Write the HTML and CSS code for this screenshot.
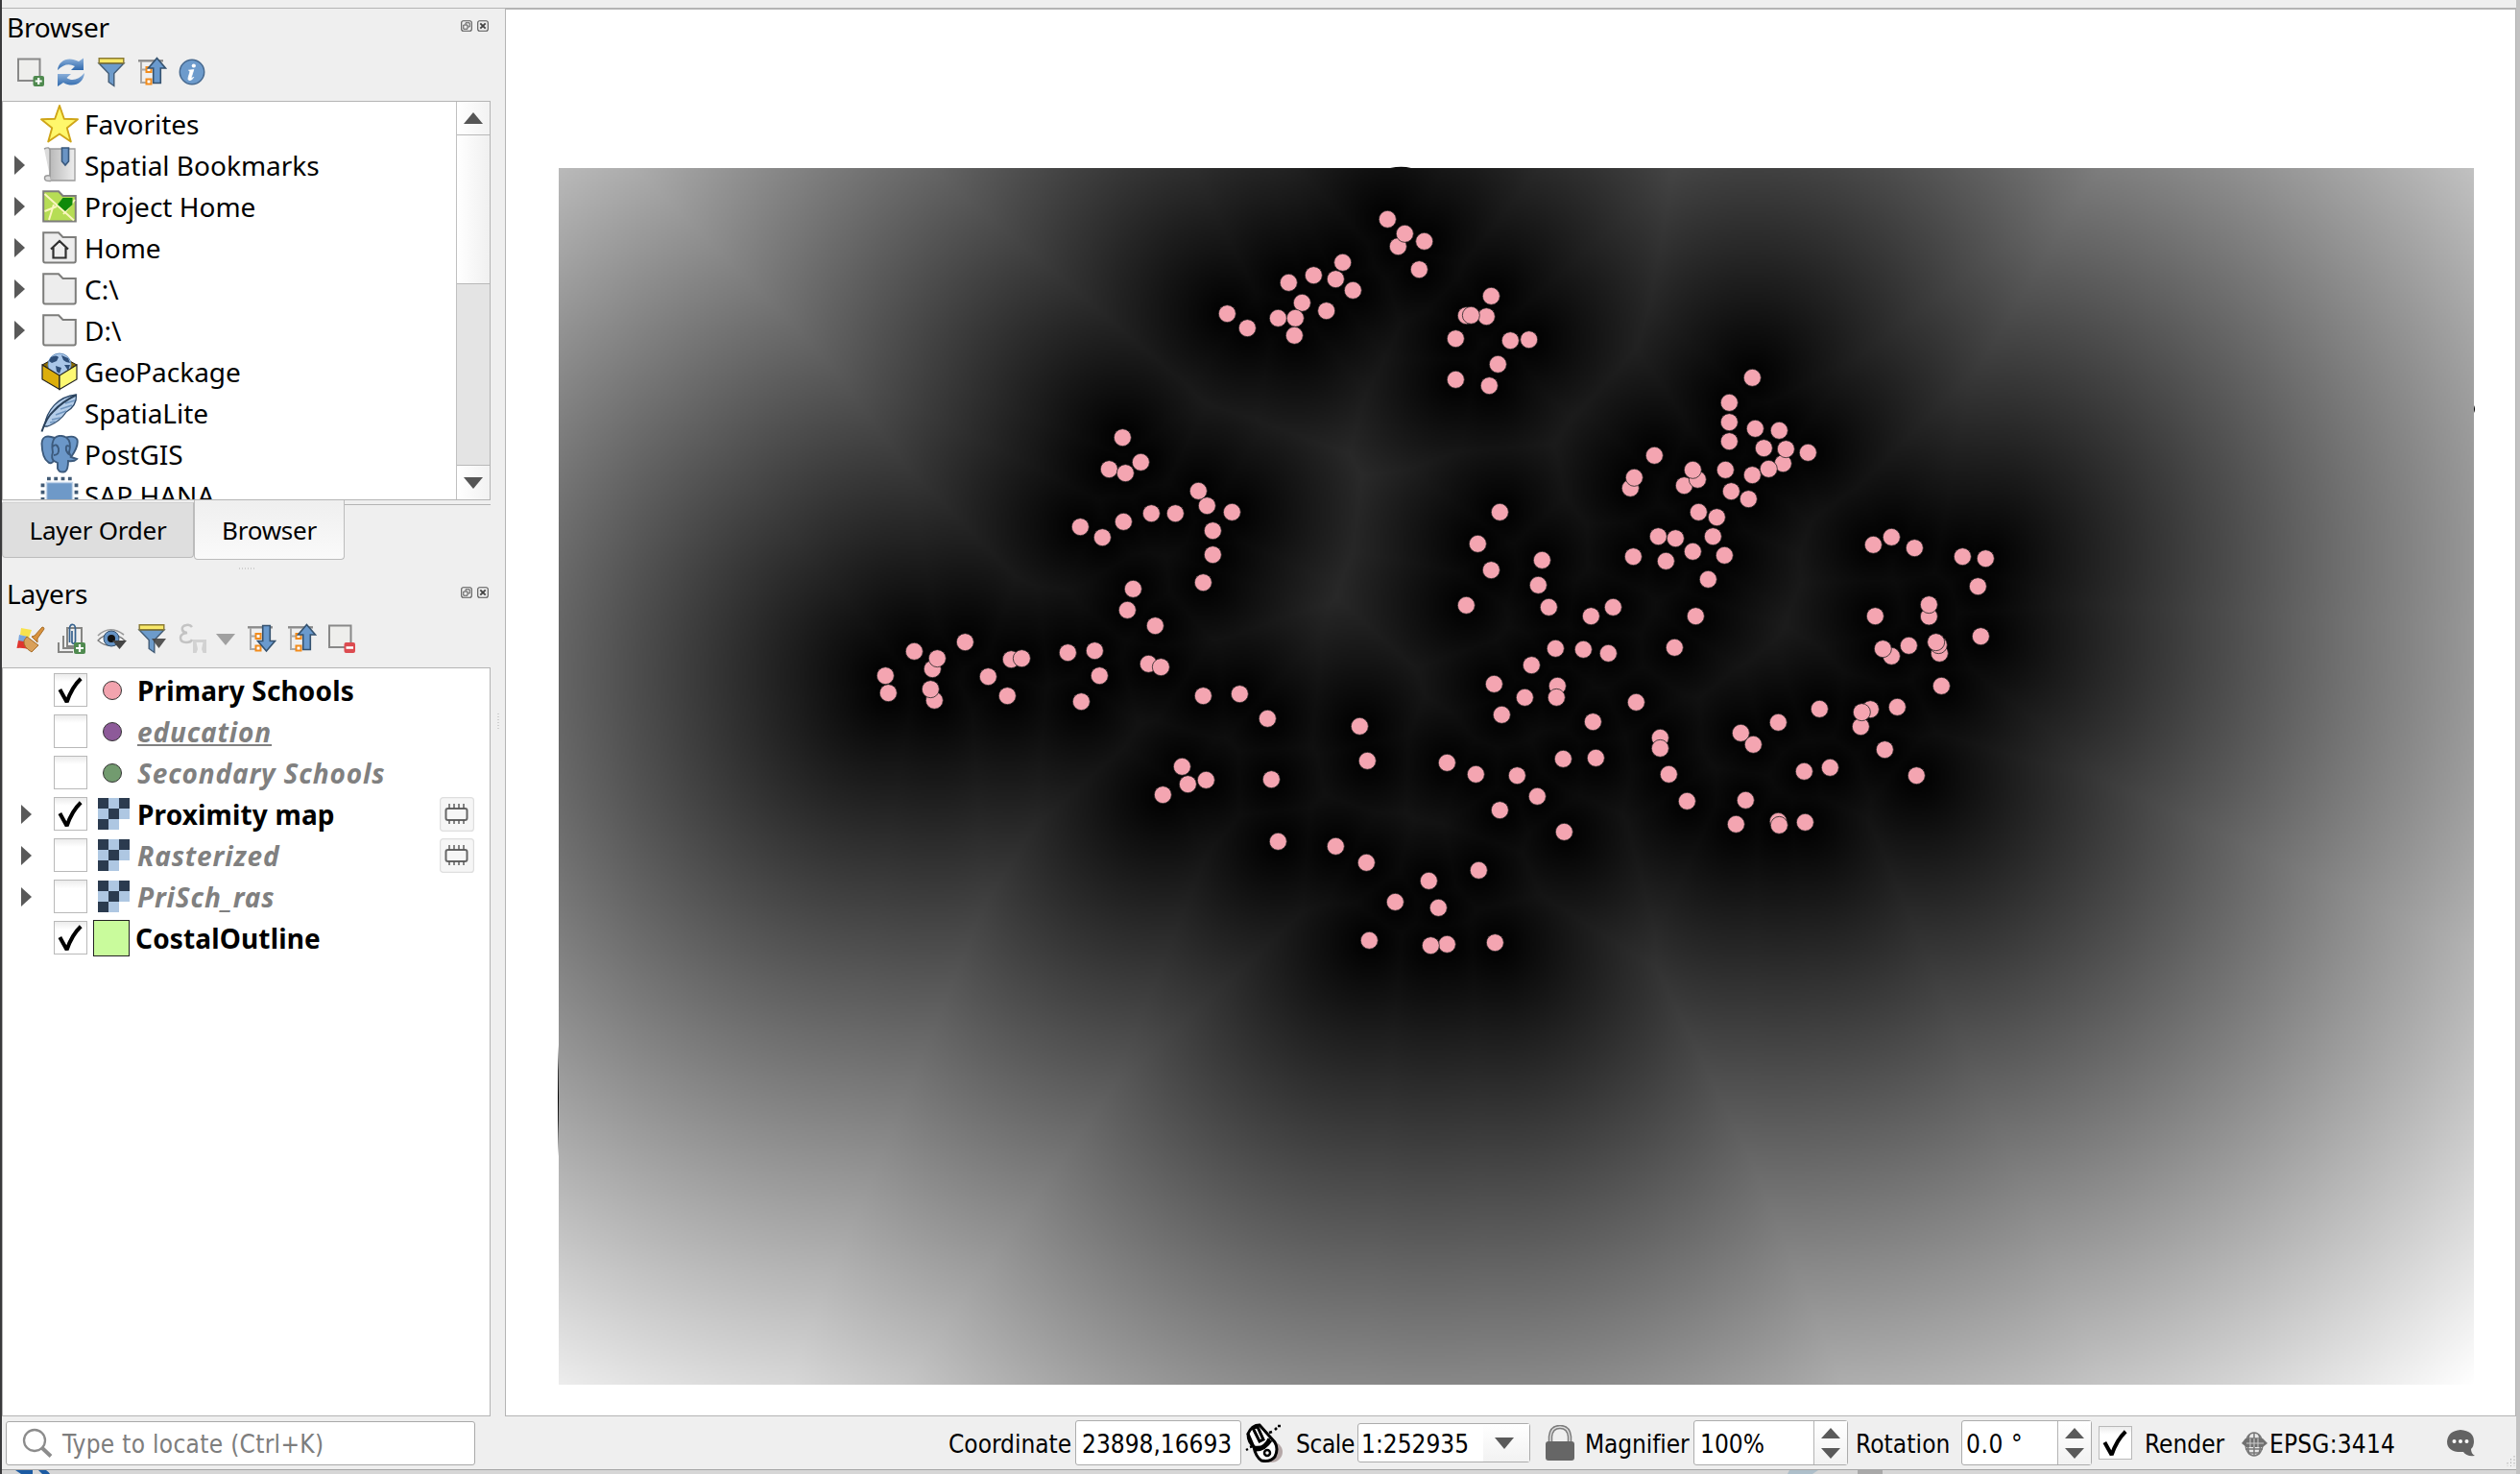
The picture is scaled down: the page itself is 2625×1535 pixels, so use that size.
FILE: index.html
```html
<!DOCTYPE html>
<html lang="en">
<head>
<meta charset="utf-8">
<title>Proximity map</title>
<link rel="stylesheet" href="styles.css">
</head>
<body>
<svg class="defs" width="0" height="0">
  <defs>
    <linearGradient id="gRefresh" x1="0" y1="0" x2="0" y2="1"><stop offset="0" stop-color="#8fb3dc"/><stop offset="1" stop-color="#2f69ad"/></linearGradient>
    <linearGradient id="gBook" x1="0" y1="0" x2="1" y2="0"><stop offset="0" stop-color="#b9b9b9"/><stop offset="1" stop-color="#eeeeee"/></linearGradient>
    <symbol id="float" viewBox="0 0 12 12"><rect x=".7" y=".7" width="10.6" height="10.6" rx="2" fill="none" stroke="#555" stroke-width="1.1"/><path d="M5 4.500V2.800H9.200V7H7.500M2.800 5H7V9.200H2.800Z" fill="none" stroke="#555" stroke-width="1"/></symbol>
    <symbol id="close" viewBox="0 0 12 12"><rect x=".7" y=".7" width="10.6" height="10.6" rx="2" fill="none" stroke="#555" stroke-width="1.1"/><path d="M3.300 3.300 8.700 8.700M8.700 3.300 3.300 8.700" stroke="#444" stroke-width="1.900"/></symbol>
    <symbol id="tri" viewBox="0 0 11 20"><path d="M0 0 11 10 0 20Z" fill="#595959"/></symbol>
    <symbol id="folder" viewBox="0 0 36 34"><path d="M1.200 1.200H17L21.500 6H34.800V30.500Q34.800 32.500 33 32.500H3Q1.200 32.500 1.200 30.500Z" fill="#ededed" stroke="#7d7d7b" stroke-width="2"/></symbol>
    <symbol id="raster" viewBox="0 0 33 33"><path d="M0 0H11V11H0ZM22 0H33V11H22ZM11 11H22V22H11ZM0 22H11V33H0Z" fill="#2b3b4f"/><path d="M11 0H22V11H11ZM0 11H11V22H0ZM22 11H33V22H22ZM11 22H22V33H11Z" fill="#aec7e2"/></symbol>
    <symbol id="check" viewBox="0 0 34 34"><path d="M5.500 16.500 13 30Q18.500 14 28 5" fill="none" stroke="#000" stroke-width="4.200" stroke-linejoin="bevel"/></symbol>
    <symbol id="funnel" viewBox="0 0 32 32"><path d="M3 7H29L18.800 17.500V30.500L13.200 26.500V17.500Z" fill="#6d9bcb" stroke="#415a75" stroke-width="1.400"/><path d="M3.200 1.800H28.800V6.800H3.200Z" fill="#f8e868" stroke="#8a7a33" stroke-width="1.400"/></symbol>
    <symbol id="tree" viewBox="0 0 32 32"><path d="M2 4.300H28" stroke="#8b8b8b" stroke-width="2.400"/><path d="M5 5V27H11M5 13.500H11" fill="none" stroke="#a8a8a8" stroke-width="2"/><path d="M10.500 11H15.500V16H10.500ZM10.500 23.500H15.500V28.500H10.500Z" fill="#fff" stroke="#f28c1c" stroke-width="2"/></symbol>
    <symbol id="chip" viewBox="0 0 36 36"><rect x=".6" y=".6" width="34.800" height="34.800" rx="3" fill="#f6f6f6" stroke="#dedede" stroke-width="1.200"/><rect x="6.500" y="12" width="22" height="12" rx="2" fill="none" stroke="#666" stroke-width="2"/><path d="M10 7V12M15 7V12M20 7V12M25 7V12M10 24V28M15 24V28M20 24V28M25 24V28" stroke="#555" stroke-width="1.400"/></symbol>
  </defs>
</svg>
<div class="window">
  <div class="topstrip"></div>
  <main class="main">
    <aside class="docks">
      <section class="dock browser">
        <header class="title"><h2 class="ui">Browser</h2><span class="tools"><svg><use href="#float"/></svg><svg><use href="#close"/></svg></span></header>
        <div class="toolbar">
          <svg viewBox="0 0 32 32"><rect x="3" y="2.500" width="22.500" height="22.500" fill="#eeeeec" stroke="#888" stroke-width="2"/><rect x="18.500" y="20" width="11.500" height="11" rx="2" fill="#4f8a4f"/><path d="M24.200 22V29M20.700 25.500H27.700" stroke="#fff" stroke-width="2.200"/></svg>
          <svg viewBox="0 0 32 32"><path d="M2 14C3 4 13-1 24 5L29 1.500V14H16L20 10C14 7 8 8 2 14Z" fill="url(#gRefresh)"/><path d="M30 17C29 28 18 33 8 27L2 31V18H16L11.500 22C17 26 24 24 30 17Z" fill="url(#gRefresh)"/></svg>
          <svg><use href="#funnel"/></svg>
          <svg viewBox="0 0 32 32"><use href="#tree"/><path d="M21.500 1.500 30.500 12H25.300V27.500H17.700V12H12.500Z" fill="#6a9ace" stroke="#35526f" stroke-width="1.600"/></svg>
          <svg viewBox="0 0 32 32"><circle cx="16" cy="16" r="12.700" fill="#6d9bcc" stroke="#47698f" stroke-width="1.500"/><circle cx="17.800" cy="9.500" r="2.100" fill="#fff"/><path d="M12.500 14.200 17.800 13.500 15.200 21.800Q15 23 17.800 21.400 15.500 25.300 12.800 24.500 11.500 24 12.200 21.600L14 15.600Z" fill="#fff" stroke="#fff" stroke-width=".8"/></svg>
        </div>
        <div class="tree">
          <ul class="nodes">
            <li><i></i><svg class="ic" viewBox="0 0 40 40"><path d="M20 1 24.800 14.700 39 15.300 27.800 24.300 31.800 38.500 20 30.500 8.200 38.500 12.200 24.300 1 15.300 15.200 14.700Z" fill="#fff76b" stroke="#cfa518" stroke-width="1.900" stroke-linejoin="round"/></svg><span class="ui">Favorites</span></li>
            <li><svg class="ar"><use href="#tri"/></svg><svg class="ic" viewBox="0 0 40 40"><path d="M10 3H36V36H10Z" fill="url(#gBook)" stroke="#9a9a9a" stroke-width="1.300"/><path d="M4 3Q10 0 10 5V31Q4 30 4.500 34 5 37 11 36.500" fill="#dcdcdc" stroke="#9a9a9a" stroke-width="1.500"/><path d="M22.500 2H29.500V16L26 20 22.500 16Z" fill="#6a94c4" stroke="#38587c" stroke-width="1.600"/></svg><span class="ui">Spatial Bookmarks</span></li>
            <li><svg class="ar"><use href="#tri"/></svg><svg class="ic" viewBox="0 0 40 40"><path d="M3.200 4.200H19L23.500 9H36.800V35.500H3.200Z" fill="#b6dd55" stroke="#7d7d7b" stroke-width="2"/><path d="M4.500 7 35 34.500M4.500 25 17 20M9 34 14 18M24 28 36 13" stroke="#fbf6c0" stroke-width="2" fill="none"/><path d="M18 18 23.500 11H33.500V18L26 25Z" fill="#0f8a0a"/></svg><span class="ui">Project Home</span></li>
            <li><svg class="ar"><use href="#tri"/></svg><svg class="ic" viewBox="0 0 40 40"><use href="#folder" x="2" y="3" width="36" height="34"/><path d="M11 21.500 20 13 29 21.500M13.500 20V30.500H26.500V20" fill="none" stroke="#2f2f2f" stroke-width="2.200"/></svg><span class="ui">Home</span></li>
            <li><svg class="ar"><use href="#tri"/></svg><svg class="ic" viewBox="0 0 40 40"><use href="#folder" x="2" y="3" width="36" height="34"/></svg><span class="ui">C:\</span></li>
            <li><svg class="ar"><use href="#tri"/></svg><svg class="ic" viewBox="0 0 40 40"><use href="#folder" x="2" y="3" width="36" height="34"/></svg><span class="ui">D:\</span></li>
            <li><i></i><svg class="ic" viewBox="0 0 40 40"><path d="M2 13 20 3 38 13 20 24Z" fill="#8a6a00" stroke="#222" stroke-width="1"/><circle cx="20" cy="13" r="12" fill="#a9c6e8" stroke="#6a92bf"/><path d="M11 5Q17 2 19 5L17 9 12 11 9 9ZM22 3 29 6 31 11 27 10 24 8ZM16 14 22 16 20 22 17 20ZM25 13 31 13 29 19Z" fill="#2d4d77"/><path d="M2 13 20 24V38.500L2 28Z" fill="#dcae0b" stroke="#222" stroke-width="1.200"/><path d="M38 13 20 24V38.500L38 28Z" fill="#fdf872" stroke="#222" stroke-width="1.200"/></svg><span class="ui">GeoPackage</span></li>
            <li><i></i><svg class="ic" viewBox="0 0 40 40"><path d="M4 34C7 17 18 3 37.500 1 38 10 34 15 27 19 23 25 17 30 10 33L7 34Z" fill="#b4cde9" stroke="#2e4a6a" stroke-width="1.300"/><path d="M12 27 21 25M16 22 27 18M21 16 33 12M26 10 36 7M10 30 16 29" fill="none" stroke="#6f95bf" stroke-width="1.500"/><path d="M1.500 39.500Q6 25 14 18 22 9 37 1.500" fill="none" stroke="#2a415b" stroke-width="2"/></svg><span class="ui">SpatiaLite</span></li>
            <li><i></i><svg class="ic" viewBox="0 0 40 40"><path d="M15 3Q2-2 1.500 9 2 24 8 28 11 31 14 27L18 29V35Q20 40 26 38 29 36 29 27 35 28 38 25L32 23Q40 12 38.500 5 36 0 27 2.500 20-1 15 3Z" fill="#6b97c8" stroke="#3c5a7c" stroke-width="1.900"/><path d="M15 3Q11 8 13 18 11 24 14 27M27 2.500Q33 7 30 18L32 23M13 12Q17 8 19 14 20 21 14 21M30 12Q26 9 27 16 29 20 30 20" fill="none" stroke="#3c5a7c" stroke-width="1.900"/></svg><span class="ui">PostGIS</span></li>
            <li><i></i><svg class="ic" viewBox="0 0 40 40"><rect x="6.500" y="6.500" width="27" height="27" fill="#6e99c8" stroke="#c3d5ea" stroke-width="1.500"/><path d="M7 2.500H33M7 37.500H33" stroke="#415a75" stroke-width="3.500" stroke-dasharray="3.800 3.500"/><path d="M2.500 7.500V33M37.500 7.500V33" stroke="#415a75" stroke-width="3.800" stroke-dasharray="3.800 3.500"/></svg><span class="ui">SAP HANA</span></li>
          </ul>
          <div class="scroll"><span class="btn"><svg viewBox="0 0 20 12"><path d="M0 12 10 0 20 12Z" fill="#555"/></svg></span><span class="thumb"></span><span class="trough"></span><span class="btn down"><svg viewBox="0 0 20 12"><path d="M0 0 10 12 20 0Z" fill="#555"/></svg></span></div>
        </div>
        <nav class="tabs"><span class="tab ui">Layer Order</span><span class="tab active ui">Browser</span><span class="rest"></span></nav>
      </section>
      <section class="dock layers">
        <div class="grip"><svg width="18" height="2"><path d="M0 1H18" stroke="#b0b0b0" stroke-dasharray="1 2"/></svg></div>
        <header class="title"><h2 class="ui">Layers</h2><span class="tools"><svg><use href="#float"/></svg><svg><use href="#close"/></svg></span></header>
        <div class="toolbar">
          <svg viewBox="0 0 32 32"><path d="M6 5 17 7 14 15 5 12Z" fill="#f8e24c"/><path d="M4 12 13 14 12 21 3 19Z" fill="#7aa6dc"/><path d="M3 18 14 20 16 28Q8 25 1.500 26Z" fill="#e0352e"/><path d="M12 14 24 23 17 30Q8 25 9 18Z" fill="#d9a05a" stroke="#a66c28"/><path d="M17 14 20 13 28 4Q30 4 30 6L23 16 23 20Z" fill="#d9923d" stroke="#a66c28"/></svg>
          <svg viewBox="0 0 32 32"><path d="M3 20V30H18M8 13V26H22M12 5H27V24H12Z" fill="none" stroke="#858583" stroke-width="2"/><path d="M14.500 20V5Q15 1 18 1.500 20.500 2 20.500 6V19Q19 23 17 20V8" fill="none" stroke="#35618e" stroke-width="1.700"/><rect x="19" y="20" width="12" height="12" rx="2" fill="#4f8a4f"/><path d="M25 22V30M21 26H29" stroke="#fff" stroke-width="2.200"/></svg>
          <svg viewBox="0 0 32 32"><path d="M2 18Q15 5 30 18 15 29 2 18Z" fill="#fff" stroke="#777" stroke-width="1.200"/><path d="M2 13Q14 1 29 12" fill="none" stroke="#999" stroke-width="1.600"/><circle cx="16" cy="16" r="8" fill="#6593c5" stroke="#35526f"/><circle cx="16" cy="16" r="4" fill="#111"/><path d="M17 18H32L24.500 27Z" fill="#444"/></svg>
          <svg viewBox="0 0 32 32"><use href="#funnel"/><path d="M16 16H31L23.500 26Z" fill="#444" fill-opacity=".9"/></svg>
          <svg class="s1" viewBox="0 0 32 32"><path d="M15 4Q13 1 9 2 4 3 5 7 6 10 10 10 3 11 3 15 3 20 9 20 14 20 15 17" fill="none" stroke="#c3c3c3" stroke-width="2.500"/><path d="M16 31V17H30V31H26.500L25 27 26.500 20H19.500L21 27 19.500 31Z" fill="#d2d2d2"/></svg>
          <svg class="drop" viewBox="0 0 20 12"><path d="M0 0H20L10 12Z" fill="#a0a0a0"/></svg>
          <svg class="s2" viewBox="0 0 32 32"><use href="#tree"/><path d="M21.500 29 30.500 18.500H25.300V2.500H17.700V18.500H12.500Z" fill="#6a9ace" stroke="#35526f" stroke-width="1.600"/></svg>
          <svg viewBox="0 0 32 32"><use href="#tree"/><path d="M21.500 1.500 30.500 12H25.300V27.500H17.700V12H12.500Z" fill="#6a9ace" stroke="#35526f" stroke-width="1.600"/></svg>
          <svg viewBox="0 0 32 32"><rect x="3" y="2.500" width="22.500" height="22.500" fill="#eeeeec" stroke="#888" stroke-width="2"/><rect x="18.500" y="20" width="11.500" height="11" rx="2" fill="#dc4b50"/><path d="M20.500 25.500H28" stroke="#fff" stroke-width="2.600"/></svg>
        </div>
        <ul class="tree list">
          <li><i></i><b class="cb"><svg><use href="#check"/></svg></b><em class="dot pink"></em><span class="ui on">Primary Schools</span></li>
          <li><i></i><b class="cb"></b><em class="dot purple"></em><span class="ui off under">education</span></li>
          <li><i></i><b class="cb"></b><em class="dot green"></em><span class="ui off">Secondary Schools</span></li>
          <li><svg class="ar"><use href="#tri"/></svg><b class="cb"><svg><use href="#check"/></svg></b><svg class="ras"><use href="#raster"/></svg><span class="ui on">Proximity map</span><svg class="chip"><use href="#chip"/></svg></li>
          <li><svg class="ar"><use href="#tri"/></svg><b class="cb"></b><svg class="ras"><use href="#raster"/></svg><span class="ui off">Rasterized</span><svg class="chip"><use href="#chip"/></svg></li>
          <li><svg class="ar"><use href="#tri"/></svg><b class="cb"></b><svg class="ras"><use href="#raster"/></svg><span class="ui off">PriSch_ras</span></li>
          <li><i></i><b class="cb"><svg><use href="#check"/></svg></b><em class="poly"></em><span class="ui on">CostalOutline</span></li>
        </ul>
      </section>
    </aside>
    <div class="splitter"><svg width="2" height="18"><path d="M1 0V18" stroke="#b0b0b0" stroke-dasharray="1 2"/></svg></div>
    <div class="view"><div class="map"><canvas id="field" width="998" height="633"></canvas><svg id="points" viewBox="582 175 1995 1267"><path d="M2577 422Q2579 426 2577 430ZM1448 175Q1460 172.500 1470 175ZM582 1088Q580 1140 582 1204Z"/></svg></div></div>
  </main>
  <footer class="status">
    <div class="locator"><svg viewBox="0 0 32 32"><circle cx="13" cy="13" r="11" fill="none" stroke="#8c8c8c" stroke-width="2.300"/><path d="M21 21 30 29.500" stroke="#8c8c8c" stroke-width="4"/></svg><span class="st">Type to locate (Ctrl+K)</span></div>
    <span class="st coord">Coordinate</span><div class="field f1"><span class="st">23898,16693</span></div>
    <svg class="mouse" viewBox="0 0 40 42"><ellipse cx="27" cy="30" rx="12" ry="11" fill="#b5a7a7"/><path d="M3 11Q7 2 15 2L31 20Q35 27 31 35 26 41 17 39 11 35 9 25Z" fill="#fff" stroke="#000" stroke-width="3"/><path d="M3 11Q3 21 10 25 20 27 25 16M8 5 15 19 19 17 13 4ZM10 28Q20 29 27 18" fill="none" stroke="#000" stroke-width="3"/><circle cx="23" cy="31" r="3" fill="none" stroke="#000" stroke-width="2.500"/><path d="M25 10 28 9M31 7 33 5M34 3 37 3M1 28 3 27M5 25 8 24" stroke="#000" stroke-width="2.500"/></svg>
    <span class="st scale">Scale</span><div class="field f2"><span class="st">1:252935</span><i><svg viewBox="0 0 20 12"><path d="M0 0H20L10 12Z" fill="#5a5a5a"/></svg></i></div>
    <svg class="lock" viewBox="0 0 32 38"><path d="M6 18V12Q7 2 16 2 25 2 26 12V18" fill="none" stroke="#7d7d7d" stroke-width="4.500"/><path d="M6 18V12Q7 2 16 2 25 2 26 12V18" fill="none" stroke="#ddd" stroke-width="1.500"/><rect x="1" y="17" width="30" height="20" rx="3" fill="#666"/></svg>
    <span class="st mag">Magnifier</span><div class="field f3"><span class="st">100%</span><i><svg viewBox="0 0 20 34"><path d="M0 12 10 1 20 12ZM0 22H20L10 33Z" fill="#5a5a5a"/></svg></i></div>
    <span class="st rot">Rotation</span><div class="field f4"><span class="st">0.0 °</span><i><svg viewBox="0 0 20 34"><path d="M0 12 10 1 20 12ZM0 22H20L10 33Z" fill="#5a5a5a"/></svg></i></div>
    <b class="cb"><svg><use href="#check"/></svg></b><span class="st render">Render</span>
    <svg class="globe" viewBox="0 0 30 26"><ellipse cx="14" cy="13" rx="9" ry="12" fill="#e9e9e9" stroke="#777" stroke-width="1.500"/><path d="M14 1V25M6 7H22M5 18H23M9 3Q6 13 9 23M19 3Q22 13 19 23M8 22H20" fill="none" stroke="#777" stroke-width="1.500"/><path d="M1 12 5 7H23L28 12 23 16H6Z" fill="#707070"/><path d="M6 12H24M10 7V16M14 7V16M18 7V16" stroke="#ccc"/></svg>
    <span class="st epsg">EPSG:3414</span>
    <svg class="bubble" viewBox="0 0 30 28"><path d="M14 0Q28 1 28 12 28 17 25 20 25 25 29 27 20 28 17 23 0 24 0 12 1 1 14 0Z" fill="#636363"/><circle cx="7.500" cy="12" r="2" fill="#fff"/><circle cx="14" cy="12" r="2" fill="#fff"/><circle cx="20.500" cy="12" r="2" fill="#fff"/></svg>
    <svg class="sizegrip" viewBox="0 0 12 12"><path d="M10 1V12M6.500 4V12M3 8V12" stroke="#b0b0b0" stroke-dasharray="1.500 2"/></svg>
  </footer>
  <div class="below"><svg width="2619" height="4"><path d="M14 0H32V4H20ZM38 0H46Q49 2 50 4H42Z" fill="#1c5ba3"/><path d="M1862 0H1892L1886 4H1860Z" fill="#aebfca"/><path d="M1933 0H1959V4H1933Z" fill="#a9a9a9"/></svg></div>
</div>
<script src="map.js"></script>
</body>
</html>
```
FILE: styles.css
```css
* { box-sizing: border-box; }
body { margin: 0; width: 2625px; height: 1535px; overflow: hidden; background: #efefef; color: #000; }
.defs { position: absolute; }
h2, ul { margin: 0; padding: 0; font-weight: 400; list-style: none; }
svg { display: block; flex: none; }
i, em { font-style: normal; }
.ui { font: 400 28px/38px "Noto Sans", sans-serif; white-space: nowrap; }
.st { flex: none; padding-top: 2px; font: 400 26px/34px "DejaVu Sans Condensed", "DejaVu Sans", sans-serif; font-stretch: condensed; white-space: nowrap; }

.window { display: flex; flex-direction: column; height: 1535px; border: solid #c2c2c2; border-width: 0 4px 0 2px; border-left-color: #3a3a3c; }
.topstrip { height: 9px; border-bottom: 1px solid #b4b4b4; }
.main { display: flex; height: 1466px; }
.docks { display: flex; flex-direction: column; width: 509px; }
.title { display: flex; justify-content: space-between; height: 42px; padding: 0 2px 0 5px; }
.title .ui { letter-spacing: -.2px; }
.tools { display: flex; gap: 5px; padding-top: 12px; }
.tools svg { width: 12px; height: 12px; }
.toolbar { display: flex; gap: 10px; height: 54px; padding: 8px 0 0 14px; }
.toolbar svg { width: 32px; height: 32px; }
.toolbar .s1 { margin-left: 1px; }
.toolbar .drop { width: 20px; height: 12px; margin: 11px 1px 0 -2px; }
.toolbar .s2 { margin-right: 0; }

.tree { border: 1px solid #b4b4b4; background: #fff; }
.browser { height: 575px; }
.browser .tree { display: flex; height: 416px; overflow: hidden; }
.nodes { flex: 1; padding-top: 1px; }
.nodes li { display: flex; align-items: center; height: 43px; padding-left: 12px; }
.nodes .ar, .nodes i { width: 11px; height: 20px; margin-right: 16px; }
.ic { width: 40px; height: 40px; margin-right: 6px; }
.scroll { display: flex; flex-direction: column; width: 35px; border-left: 1px solid #c0c0c0; }
.btn { display: flex; align-items: center; justify-content: center; height: 35px; border-bottom: 1px solid #b8b8b8; background: linear-gradient(90deg, #fff, #f2f2f2); }
.btn svg { width: 20px; height: 12px; }
.down { border: 0; }
.thumb { height: 155px; background: linear-gradient(90deg, #fff, #f0f0f0); border-bottom: 1px solid #b8b8b8; }
.trough { flex: 1; background: #e4e4e4; border-bottom: 1px solid #b8b8b8; }
.tabs { display: flex; align-items: flex-start; height: 63px; }
.tab { width: 200px; height: 58px; margin-top: 2px; padding-top: 9px; text-align: center; font-size: 26px; letter-spacing: -.25px; background: #dedede; border: 1px solid #bcbcbc; border-top-color: #d2d2d2; border-radius: 0 0 4px 4px; }
.active { width: 157px; height: 62px; margin: 0; padding-top: 12px; background: linear-gradient(#efefef, #fafafa); border-top: 0; }
.rest { flex: 1; height: 5px; border-bottom: 1px solid #b4b4b4; }

.layers { display: flex; flex-direction: column; height: 891px; }
.grip { height: 15px; padding: 7px 0 0 247px; }
.list { flex: 1; padding-top: 1px; }
.list li { display: flex; align-items: center; height: 43px; padding-left: 19px; }
.list i, .list .ar { width: 11px; height: 20px; margin-right: 23px; }
.cb { display: block; flex: none; width: 35px; height: 35px; border: 1px solid #b9b9b9; background: linear-gradient(#ececec, #fff 8px); }
.cb svg { width: 33px; height: 33px; }
.dot { width: 20px; height: 20px; margin: 0 16px 0 16px; border: 1px solid #333; border-radius: 50%; }
.pink { background: #f2a3ae; }
.purple { background: #8d5a99; }
.green { background: #729b6f; }
.ras { width: 33px; height: 33px; margin: 0 8px 0 11px; }
.poly { width: 38px; height: 38px; margin: 0 6px 0 6px; background: #c9fb9c; border: 1.5px solid #222; }
.on { font-weight: 700; letter-spacing: .15px; }
.off { font-weight: 700; font-style: italic; color: #808080; letter-spacing: .85px; }
.under { text-decoration: underline; }
.chip { width: 36px; height: 36px; margin: 0 16px 0 auto; }

.splitter { width: 15px; padding: 734px 0 0 7px; }
.view { flex: 1; border: 1px solid #b4b4b4; background: #fff; padding: 165px 0 0 55px; }
.map { display: grid; width: 1995px; height: 1267px; }
.map > * { grid-area: 1 / 1; width: 1995px; height: 1267px; }
#points { overflow: visible; }
#points circle { fill: #f4a5b1; stroke: #232323; stroke-width: .8; }

.status { display: flex; align-items: center; height: 56px; padding-left: 4px; border-bottom: 1px solid #a5a5a5; }
.below { flex: 1; background: #d6d6d6; }
.locator { display: flex; align-items: center; flex: none; width: 489px; height: 46px; margin-right: 493px; padding-left: 16px; background: #fff; border: 1px solid #a9a9a9; border-radius: 3px; color: #7d7d7d; }
.locator svg { width: 32px; height: 32px; margin-right: 10px; }
.locator .st { letter-spacing: .3px; }
.field { display: flex; align-items: center; flex: none; height: 47px; padding-left: 6px; background: #fff; border: 1px solid #acacac; border-radius: 3px; }
.field i { display: flex; align-items: center; justify-content: center; height: 100%; margin-left: auto; background: linear-gradient(#fff, #f2f2f2); }
.coord { width: 132px; }
.f1 { width: 173px; margin-right: 4px; }
.scale { width: 64px; letter-spacing: -.4px; }
.f2 { width: 180px; height: 41px; margin-right: 15px; padding-left: 3px; }
.f2 i { width: 48px; }
.f2 i svg { width: 20px; height: 12px; margin-right: 4px; }
.mag { width: 113px; letter-spacing: -.1px; }
.f3 { width: 161px; margin-right: 8px; }
.rot { width: 110px; letter-spacing: .1px; }
.f4 { width: 136px; margin-right: 7px; padding-left: 4px; }
.f4 .st { letter-spacing: .6px; }
.f3 i, .f4 i { width: 35px; border-left: 1px solid #b4b4b4; }
.f3 i svg, .f4 i svg { width: 20px; height: 34px; }
.mouse { width: 40px; height: 42px; margin-right: 13px; }
.lock { width: 32px; height: 38px; margin-right: 10px; }
.render { width: 100px; margin-left: 13px; }
.globe { width: 30px; height: 26px; margin-top: 2px; }
.epsg { width: 133px; letter-spacing: .2px; }
.bubble { width: 30px; height: 28px; margin-left: 52px; }
.sizegrip { width: 12px; height: 12px; margin: 36px 0 0 30px; }
```
FILE: map.js
```js
const tiles = [
  [1200, 180, 736,145, 769,230, 790,190, 851,214, 835,302, 596,280, 505,320, 574,332, 427,343, 628,367, 469,406, 545,431, 235,440, 298,485, 394,454, 448,454, 445,508, 1060,385, 982,446, 1045,449, 997,445, 949,518, 1120,524, 1178,521, 1081,598, 949,646, 1054,665],
  [900, 430, 808,77, 766,176, 817,188, 865,154, 1072,290, 1045,244, 1150,310, 973,314, 898,314, 811,340, 676,356, 745,389, 1090,368, 1090,443, 1060,530, 841,550, 823,616, 910,665, 889,784, 928,794, 316,716, 157,745, 214,800, 229,767, 67,821, 76,875, 220,898, 208,863, 388,824, 460,770, 493,767, 448,884, 637,749, 721,743, 736,821, 679,902, 1060,884, 1174,878, 1261,955, 994,1105, 1012,1160, 1069,1147, 934,1193, 1273,1145],
  [1480, 370, 1036,70, 964,148, 964,209, 964,269, 1045,229, 1120,235, 1072,290, 1132,338, 1141,293, 1210,304, 1087,355, 1036,374, 952,358, 730,313, 655,415, 667,382, 823,407, 865,388, 850,358, 970,425, 1024,449, 868,490, 925,506, 913,566, 742,566, 796,572, 850,613, 949,625, 664,629, 766,643, 898,700, 859,815, 793,913, 247,490, 178,589, 220,671, 142,781, 379,640, 367,718, 400,787, 532,815, 601,787, 421,916, 508,919, 586,931, 346,968, 229,1027, 427,1033, 424,1069, 325,1069, 253,1123, 538,1145, 673,1084, 748,1195, 748,1228, 445,1261, 547,1258, 775,1309, 832,1393, 82,1273, 172,1309, 301,1313, 364,1378, 247,1421, 448,1489, 1000,1180, 1039,1216, 1117,1147, 1246,1105, 1198,1300, 1279,1288, 1015,1390, 985,1465, 1117,1456, 1120,1468, 1201,1459],
  [1900, 520, 154,142, 211,118, 283,152, 433,179, 505,185, 481,272, 328,366, 328,329, 160,365, 211,490, 184,467, 265,457, 361,481, 358,455, 350,446, 490,428, 367,583, 145,656, 115,710, 118,665, 229,649, 190,782, 289,863],
  [1200, 720, 649,109, 673,217, 394,469, 574,484, 670,535, 760,658, 865,592, 1021,559, 895,676, 679,778, 922,790, 871,794, 1072,785]
];
const schools = [];
for (const [ox, oy, ...v] of tiles)
  for (let i = 0; i < v.length; i += 2) schools.push([ox + v[i] / 3, oy + v[i + 1] / 3]);

const svg = document.getElementById('points');
for (const [x, y] of schools) {
  const c = document.createElementNS('http://www.w3.org/2000/svg', 'circle');
  c.setAttribute('cx', x); c.setAttribute('cy', y); c.setAttribute('r', 9);
  svg.appendChild(c);
}

// Proximity raster: grey level grows with the distance to the nearest school.
const canvas = document.getElementById('field');
const ctx = canvas.getContext('2d');
const { width, height } = canvas;
const image = ctx.createImageData(width, height);
const dist = new Float32Array(width * height);
let max = 0;
for (let y = 0, k = 0; y < height; y++)
  for (let x = 0; x < width; x++, k++) {
    const px = 582 + x * 2, py = 176 + y * 2;
    let best = 1e12;
    for (let i = 0; i < schools.length; i++) {
      const dx = schools[i][0] - px, dy = schools[i][1] - py, d = dx * dx + dy * dy;
      if (d < best) best = d;
    }
    dist[k] = Math.sqrt(best);
    if (dist[k] > max) max = dist[k];
  }
for (let k = 0; k < dist.length; k++) {
  const g = 255 * dist[k] / max;
  image.data.set([g, g, g, 255], k * 4);
}
ctx.putImageData(image, 0, 0);
```
